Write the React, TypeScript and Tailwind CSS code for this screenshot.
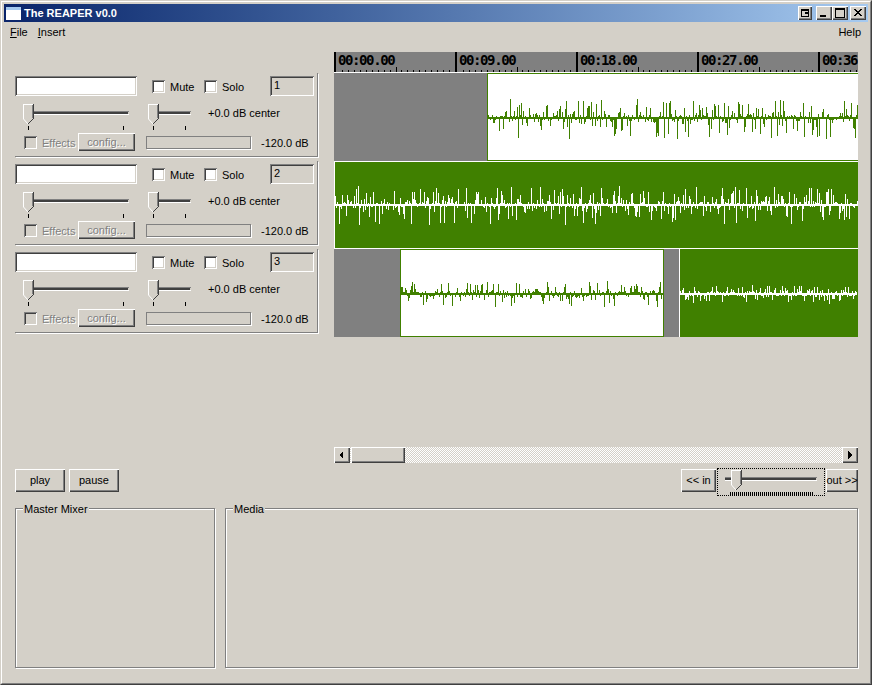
import type { ReactNode } from 'react'

const RAISED = 'bg-[#d4d0c8] shadow-[inset_1px_1px_0_#ffffff,inset_-1px_-1px_0_#404040,inset_-2px_-2px_0_#808080]'
const SUNKEN = 'shadow-[inset_1px_1px_0_#808080,inset_-1px_-1px_0_#ffffff,inset_2px_2px_0_#404040,inset_-2px_-2px_0_#d4d0c8]'

function wave(seed: number, width: number, up: number, down: number) {
  let s = seed
  const rnd = () => {
    s = (s * 1664525 + 1013904223) % 4294967296
    return s / 4294967296
  }
  const bars: { x: number; a: number; b: number }[] = []
  for (let x = 0; x < width; x++) {
    const r = rnd()
    const m = rnd()
    if (r < 0.14) continue
    const tall = Math.pow(m, 2.6)
    if (rnd() < 0.55) bars.push({ x, a: Math.round(1 + tall * up), b: 0 })
    else bars.push({ x, a: 0, b: Math.round(1 + tall * down) })
  }
  return bars
}

function Wave({ seed, width, height, center, up, down, color }: {
  seed: number; width: number; height: number; center: number; up: number; down: number; color: string
}) {
  return (
    <svg width={width} height={height} className="block" shapeRendering="crispEdges">
      <rect x={0} y={center} width={width} height={2} fill={color} />
      {wave(seed, width, up, down).map(b => (
        <rect key={b.x} x={b.x} y={center - b.a} width={1} height={b.a + b.b + 2} fill={color} />
      ))}
    </svg>
  )
}

function Slider({ width, ticks }: { width: number; ticks: number[] }) {
  return (
    <svg width={width} height={27} className="block" shapeRendering="crispEdges">
      <rect x={5} y={7} width={width - 5} height={1} fill="#808080" />
      <rect x={5} y={8} width={width - 6} height={2} fill="#404040" />
      <rect x={5} y={10} width={width - 5} height={1} fill="#ffffff" />
      <polygon points="0,0 10,0 10,14 5,20 0,14" fill="#d4d0c8" />
      <path d="M0.5 15 V0.5 H10" stroke="#ffffff" fill="none" />
      <path d="M10.5 0 V14.5" stroke="#404040" fill="none" />
      <path d="M9.5 1 V14" stroke="#808080" fill="none" />
      <path d="M10 15 L5 20" stroke="#404040" fill="none" shapeRendering="auto" />
      <path d="M0.5 15 L5 20" stroke="#ffffff" fill="none" shapeRendering="auto" />
      {ticks.map(t => <rect key={t} x={t} y={22} width={1} height={4} fill="#000000" />)}
    </svg>
  )
}

function Check({ disabled, label }: { disabled?: boolean; label: string }) {
  return (
    <div className="flex items-center">
      <div className={`w-[13px] h-[13px] ${SUNKEN} ${disabled ? 'bg-[#d4d0c8]' : 'bg-white'}`} />
      <span className={`ml-[5px] pt-[2px] ${disabled ? 'text-[#808080] [text-shadow:1px_1px_0_#ffffff]' : ''}`}>{label}</span>
    </div>
  )
}

function TrackPanel({ num }: { num: number }) {
  return (
    <div className="h-[84px] mb-[4px] pt-[3px] border-r border-b border-[#808080] shadow-[1px_1px_0_#ffffff]">
      <div className="flex items-center h-[20px]">
        <div className={`w-[122px] h-[20px] bg-white ${SUNKEN}`} />
        <div className="ml-[15px] w-[52px]"><Check label="Mute" /></div>
        <Check label="Solo" />
        <div className={`ml-[26px] w-[44px] h-[20px] pl-[4px] leading-[18px] ${SUNKEN}`}>{num}</div>
      </div>
      <div className="flex mt-[8px] h-[26px]">
        <div className="ml-[8px] w-[125px]"><Slider width={106} ticks={[5, 100]} /></div>
        <Slider width={43} ticks={[5, 37]} />
        <span className="ml-[17px] leading-[18px]">+0.0 dB center</span>
      </div>
      <div className="flex items-center mt-[3px] h-[18px]">
        <div className="ml-[9px] w-[54px]"><Check disabled label="Effects" /></div>
        <div className={`w-[57px] h-[18px] text-center leading-[19px] text-[#808080] [text-shadow:1px_1px_0_#ffffff] ${RAISED}`}>config...</div>
        <div className="ml-[11px] w-[105px] h-[13px] border border-[#808080] shadow-[1px_1px_0_#ffffff]" />
        <span className="ml-[10px] pt-[2px]">-120.0 dB</span>
      </div>
    </div>
  )
}

function Ruler() {
  const labels = ['00:00.00', '00:09.00', '00:18.00', '00:27.00', '00:36']
  return (
    <div className="flex h-[20px] bg-[#808080] overflow-hidden">
      {labels.map(l => (
        <div key={l} className="relative w-[121px] shrink-0 border-l-2 border-black pl-[2px] font-['DejaVu_Sans_Mono'] font-bold text-[14px] tracking-[-1.4px] leading-[16px] text-black">
          {l}
          <div className="absolute left-0 right-0 bottom-0 flex">
            {Array.from({ length: 20 }, (_, i) => (
              <div key={i} className="w-[6.05px] flex justify-start items-end">
                {i > 0 && <div className={`w-px bg-black ${i === 10 ? 'h-[5px]' : 'h-[2px]'}`} />}
              </div>
            ))}
          </div>
        </div>
      ))}
    </div>
  )
}

function Arrow({ dir }: { dir: 'left' | 'right' }) {
  return (
    <svg width={16} height={16} shapeRendering="crispEdges">
      <polygon points={dir === 'left' ? '9,4 9,12 5,8' : '6,4 6,12 10,8'} fill="#000000" />
    </svg>
  )
}

function Btn({ className, children }: { className: string; children: ReactNode }) {
  return <div className={`h-[23px] flex items-center justify-center ${RAISED} ${className}`}>{children}</div>
}

function TitleBtn({ className, children }: { className: string; children: ReactNode }) {
  return (
    <div className={`w-[16px] h-[14px] ${RAISED} ${className}`}>
      <svg width={16} height={14} shapeRendering="crispEdges">{children}</svg>
    </div>
  )
}

function Group({ title, className }: { title: string; className: string }) {
  return (
    <div className={`relative h-[160px] border border-[#808080] shadow-[1px_1px_0_#ffffff,inset_1px_1px_0_#ffffff] ${className}`}>
      <span className="absolute -top-[7px] left-[7px] px-[1px] bg-[#d4d0c8] leading-[14px]">{title}</span>
    </div>
  )
}

export default function App() {
  return (
    <div className="w-[872px] h-[685px] border border-[#d4d0c8] border-r-[#404040] border-b-[#404040] bg-[#d4d0c8] font-['Liberation_Sans'] text-[11px] text-black overflow-hidden">
      <div className="h-full border border-white border-r-[#808080] border-b-[#808080] p-[2px]">
        {/* Title bar */}
        <div className="flex items-center h-[18px] bg-gradient-to-r from-[#0a246a] to-[#a6caf0]">
          <div className="ml-[2px] w-[15px] h-[13px] bg-white border-t-[3px] border-[#a6caf0]" />
          <span className="ml-[3px] font-bold text-white">The REAPER v0.0</span>
          <TitleBtn className="ml-auto !w-[14px]">
            <path d="M3.5 3.5 H10.5 V10.5 H3.5 Z" stroke="#000" fill="none" />
            <rect x={3} y={3} width={8} height={2} fill="#000" />
            <rect x={7} y={6} width={4} height={2} fill="#000" />
          </TitleBtn>
          <TitleBtn className="ml-[4px]">
            <rect x={4} y={9} width={6} height={2} fill="#000" />
          </TitleBtn>
          <TitleBtn className="">
            <path d="M3.5 2.5 H12.5 V11.5 H3.5 Z" stroke="#000" fill="none" />
            <rect x={3} y={2} width={10} height={2} fill="#000" />
          </TitleBtn>
          <TitleBtn className="ml-[2px] mr-[2px]">
            <path d="M4 3 L11 10 M5 3 L12 10 M11 3 L4 10 M12 3 L5 10" stroke="#000" shapeRendering="auto" fill="none" />
          </TitleBtn>
        </div>

        {/* Menu */}
        <div className="flex h-[18px] items-center pt-[2px] pl-[6px] pr-[7px]">
          <span><u>F</u>ile</span>
          <span className="ml-[10px]"><u>I</u>nsert</span>
          <span className="ml-auto">Help</span>
        </div>

        <div className="pl-[11px] pr-[10px]">
          <div className="flex mt-[12px]">
            <div className="w-[303px] mt-[21px]">
              <TrackPanel num={1} />
              <TrackPanel num={2} />
              <TrackPanel num={3} />
            </div>

            <div className="ml-[16px] w-[524px]">
              <Ruler />
              <div className="h-px bg-white" />
              <div className="flex h-[88px] bg-[#808080]">
                <div className="w-[153px]" />
                <div className="flex-1 bg-white border border-[#408000] border-r-0">
                  <Wave seed={11} width={370} height={86} center={43} up={17} down={19} color="#408000" />
                </div>
              </div>
              <div className="h-px bg-white" />
              <div className="flex h-[86px] bg-[#408000] border-l border-white">
                <Wave seed={27} width={523} height={86} center={42} up={17} down={18} color="#ffffff" />
              </div>
              <div className="h-px bg-white" />
              <div className="flex h-[88px] bg-[#808080]">
                <div className="w-[66px]" />
                <div className="w-[264px] bg-white border border-[#408000]">
                  <Wave seed={5} width={262} height={86} center={43} up={11} down={11} color="#408000" />
                </div>
                <div className="w-[15px]" />
                <div className="flex-1 bg-[#408000] border-l border-white">
                  <Wave seed={91} width={177} height={88} center={44} up={7} down={8} color="#ffffff" />
                </div>
              </div>

              {/* Scrollbar */}
              <div className="flex h-[16px] mt-[110px] bg-[repeating-conic-gradient(#ffffff_0_25%,#d4d0c8_0_50%)] bg-[length:2px_2px]">
                <div className={`w-[16px] h-[16px] ${RAISED}`}><Arrow dir="left" /></div>
                <div className={`ml-px w-[54px] h-[16px] ${RAISED}`} />
                <div className={`ml-auto w-[16px] h-[16px] ${RAISED}`}><Arrow dir="right" /></div>
              </div>
            </div>
          </div>

          {/* Transport */}
          <div className="flex items-start h-[28px] mt-[5px]">
            <Btn className="w-[50px] mt-[1px]">play</Btn>
            <Btn className="ml-[4px] w-[50px] mt-[1px]">pause</Btn>
            <Btn className="ml-auto w-[35px] mt-[1px]">&lt;&lt; in</Btn>
            <div className="ml-px w-[108px] h-[28px] pl-[7px] pt-[1px] border border-dotted border-black">
              <svg width={93} height={25} className="block" shapeRendering="crispEdges">
                <rect x={0} y={7} width={92} height={1} fill="#808080" />
                <rect x={0} y={8} width={91} height={2} fill="#404040" />
                <rect x={0} y={10} width={92} height={1} fill="#ffffff" />
                <polygon points="6,0 16,0 16,14 11,20 6,14" fill="#d4d0c8" />
                <path d="M6.5 15 V0.5 H16" stroke="#ffffff" fill="none" />
                <path d="M16.5 0 V14.5" stroke="#404040" fill="none" />
                <path d="M15.5 1 V14" stroke="#808080" fill="none" />
                <path d="M16 15 L11 20" stroke="#404040" fill="none" shapeRendering="auto" />
                <path d="M6.5 15 L11 20" stroke="#ffffff" fill="none" shapeRendering="auto" />
                {Array.from({ length: 42 }, (_, i) => (
                  <rect key={i} x={5 + i * 2} y={22} width={1} height={4} fill="#000000" />
                ))}
              </svg>
            </div>
            <Btn className="ml-px w-[32px] mt-[1px]">out &gt;&gt;</Btn>
          </div>

          {/* Bottom group boxes */}
          <div className="flex mt-[12px]">
            <Group title="Master Mixer" className="w-[200px]" />
            <Group title="Media" className="ml-[10px] w-[633px]" />
          </div>
        </div>
      </div>
    </div>
  )
}
